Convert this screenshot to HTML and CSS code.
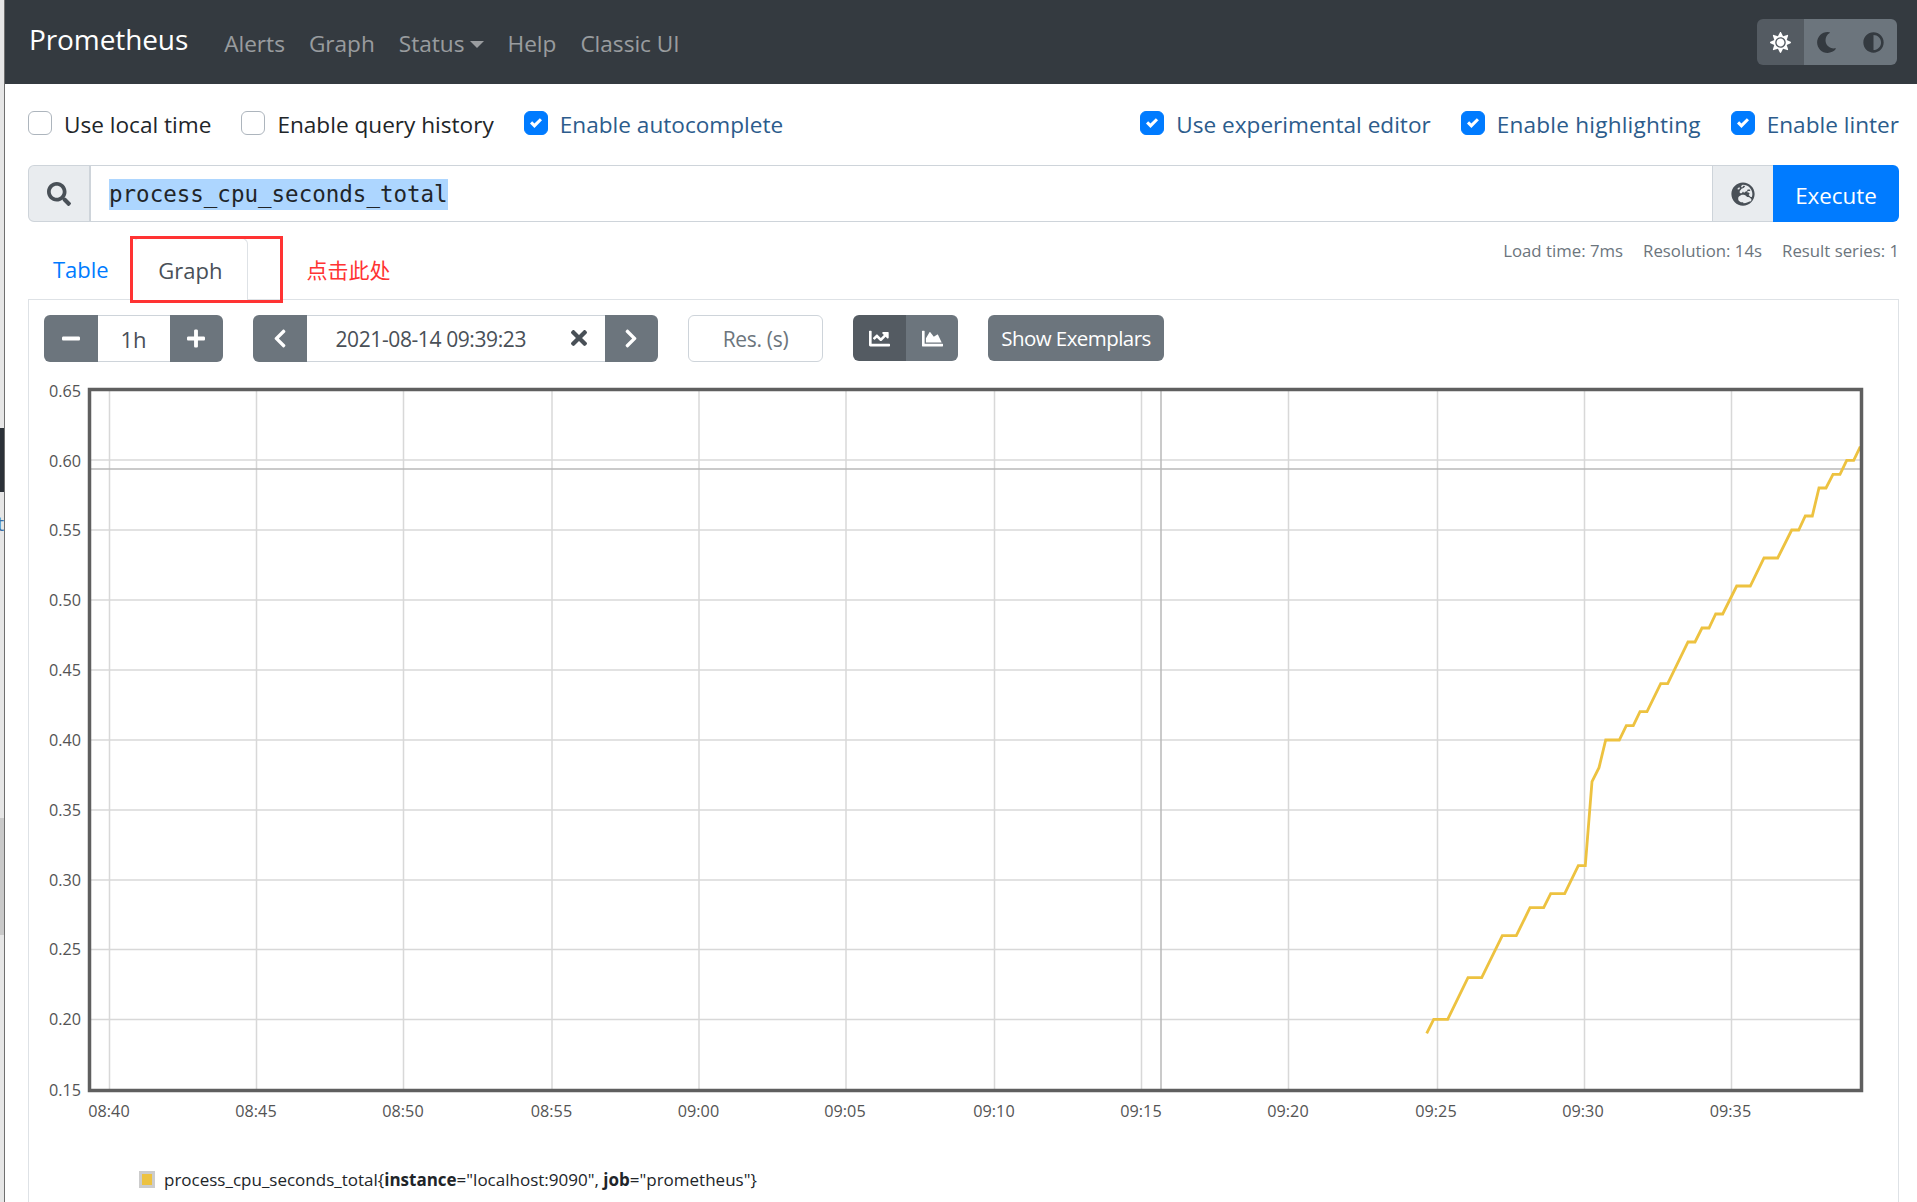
FILE: index.html
```html
<!DOCTYPE html>
<html lang="en">
<head>
<meta charset="utf-8">
<title>Prometheus Time Series Collection and Processing Server</title>
<link rel="stylesheet" href="styles.css">
</head>
<body>
<div class="edge">
  <div class="edge-dark"></div>
  <div class="edge-letter">t</div>
  <div class="edge-grey"></div>
</div>
<div class="page">
  <nav class="navbar">
    <a class="brand">Prometheus</a>
    <a class="nav-link">Alerts</a>
    <a class="nav-link">Graph</a>
    <a class="nav-link">Status<span class="caret"></span></a>
    <a class="nav-link">Help</a>
    <a class="nav-link">Classic UI</a>
    <div class="theme-toggle">
      <span class="theme-btn theme-active"><svg class="ico-theme" viewBox="0 0 512 512"><path fill="#fff" d="M256 160c-52.9 0-96 43.1-96 96s43.1 96 96 96 96-43.1 96-96-43.1-96-96-96zm246.4 80.5l-94.7-47.3 33.5-100.4c4.5-13.6-8.4-26.5-21.9-21.9l-100.4 33.5-47.4-94.8c-6.4-12.8-24.6-12.8-31 0l-47.3 94.7L92.7 70.8c-13.6-4.5-26.5 8.4-21.9 21.9l33.5 100.4-94.7 47.4c-12.8 6.4-12.8 24.6 0 31l94.7 47.3-33.5 100.5c-4.5 13.6 8.4 26.5 21.9 21.9l100.4-33.5 47.3 94.7c6.4 12.8 24.6 12.8 31 0l47.3-94.7 100.4 33.5c13.6 4.5 26.5-8.4 21.9-21.9l-33.5-100.4 94.7-47.3c13-6.5 13-24.7.2-31.1zm-155.9 106c-49.9 49.9-131.1 49.9-181 0-49.9-49.9-49.9-131.1 0-181 49.9-49.9 131.1-49.9 181 0 49.9 49.9 49.9 131.1 0 181z"/></svg></span>
      <span class="theme-btn"><svg class="ico-theme" viewBox="0 0 512 512"><path fill="#343a40" d="M283.211 512c78.962 0 151.079-35.925 198.857-94.792 7.068-8.708-.639-21.43-11.562-19.35-124.203 23.654-238.262-71.576-238.262-196.954 0-72.222 38.662-138.635 101.498-174.394 9.686-5.512 7.25-20.197-3.756-22.23A258.156 258.156 0 0 0 283.211 0c-141.309 0-256 114.511-256 256 0 141.309 114.511 256 256 256z"/></svg></span>
      <span class="theme-btn"><svg class="ico-theme" viewBox="0 0 512 512"><path fill="#343a40" d="M8 256c0 136.966 111.033 248 248 248s248-111.034 248-248S392.966 8 256 8 8 119.033 8 256zm248 184V72c101.705 0 184 82.311 184 184 0 101.705-82.311 184-184 184z"/></svg></span>
    </div>
  </nav>

  <main class="content">
    <div class="options">
      <div class="option-group">
        <label class="option"><span class="box"></span>Use local time</label>
        <label class="option"><span class="box"></span>Enable query history</label>
        <label class="option on"><span class="box"><svg class="tick" viewBox="0 0 8 8"><path fill="#fff" d="M6.564.75l-3.59 3.612-1.538-1.55L0 4.26l2.974 2.99L8 2.193z"/></svg></span>Enable autocomplete</label>
      </div>
      <div class="option-group">
        <label class="option on"><span class="box"><svg class="tick" viewBox="0 0 8 8"><path fill="#fff" d="M6.564.75l-3.59 3.612-1.538-1.55L0 4.26l2.974 2.99L8 2.193z"/></svg></span>Use experimental editor</label>
        <label class="option on wide"><span class="box"><svg class="tick" viewBox="0 0 8 8"><path fill="#fff" d="M6.564.75l-3.59 3.612-1.538-1.55L0 4.26l2.974 2.99L8 2.193z"/></svg></span>Enable highlighting</label>
        <label class="option on last"><span class="box"><svg class="tick" viewBox="0 0 8 8"><path fill="#fff" d="M6.564.75l-3.59 3.612-1.538-1.55L0 4.26l2.974 2.99L8 2.193z"/></svg></span>Enable linter</label>
      </div>
    </div>

    <div class="query">
      <span class="addon addon-left"><svg class="ico-24" viewBox="0 0 512 512"><path fill="#495057" d="M505 442.7L405.3 343c-4.5-4.5-10.6-7-17-7H372c27.6-35.3 44-79.7 44-128C416 93.1 322.9 0 208 0S0 93.1 0 208s93.1 208 208 208c48.3 0 92.7-16.4 128-44v16.3c0 6.4 2.5 12.5 7 17l99.7 99.7c9.4 9.4 24.6 9.4 33.9 0l28.3-28.3c9.4-9.4 9.4-24.6.1-34zM208 336c-70.7 0-128-57.2-128-128 0-70.7 57.2-128 128-128 70.7 0 128 57.2 128 128 0 70.7-57.2 128-128 128z"/></svg></span>
      <div class="query-input"><span class="selected">process_cpu_seconds_total</span></div>
      <span class="addon addon-right"><svg class="ico-24" viewBox="0 0 496 512"><path fill="#495057" d="M248 8C111 8 0 119 0 256s111 248 248 248 248-111 248-248S385 8 248 8zm200 248c0 22.5-3.9 44.2-10.8 64.4h-20.3c-4.3 0-8.4-1.7-11.4-4.8l-32-32.6c-4.5-4.6-4.5-12.1.1-16.7l12.5-12.5v-8.7c0-3-1.2-5.9-3.3-8l-9.4-9.4c-2.1-2.1-5-3.3-8-3.3h-16c-6.2 0-11.3-5.1-11.3-11.3 0-3 1.2-5.9 3.3-8l9.4-9.4c2.1-2.1 5-3.3 8-3.3h32c6.2 0 11.3-5.1 11.3-11.3v-9.4c0-6.2-5.1-11.3-11.3-11.3h-36.7c-8.8 0-16 7.2-16 16v4.5c0 6.9-4.4 13-10.9 15.2l-31.6 10.5c-3.3 1.1-5.5 4.1-5.5 7.6v2.2c0 4.4-3.6 8-8 8h-16c-4.4 0-8-3.6-8-8s-3.6-8-8-8H247c-3 0-5.8 1.7-7.2 4.4l-9.4 18.7c-2.7 5.4-8.2 8.8-14.3 8.8H194c-8.8 0-16-7.2-16-16V199c0-4.2 1.7-8.3 4.7-11.3l20.1-20.1c4.6-4.6 7.2-10.9 7.2-17.5 0-3.4 2.2-6.5 5.5-7.6l40-13.3c1.7-.6 3.2-1.5 4.4-2.7l26.8-26.8c2.1-2.1 3.3-5 3.3-8 0-6.2-5.1-11.3-11.3-11.3H258l-16 16v8c0 4.4-3.6 8-8 8h-16c-4.4 0-8-3.6-8-8v-20c0-2.5 1.2-4.9 3.2-6.4l28.9-21.7c1.9-.1 3.8-.3 5.7-.3C358.3 56 448 145.7 448 256zM130.1 149.1c0-3 1.2-5.9 3.3-8l25.4-25.4c2.1-2.1 5-3.3 8-3.3 6.2 0 11.3 5.1 11.3 11.3v16c0 3-1.2 5.9-3.3 8l-9.4 9.4c-2.1 2.1-5 3.3-8 3.3h-16c-6.2 0-11.3-5.1-11.3-11.3zm128 306.4v-7.1c0-8.8-7.2-16-16-16h-20.2c-10.8 0-26.7-5.3-35.4-11.8l-22.2-16.7c-11.5-8.6-18.2-22.1-18.2-36.4v-23.9c0-16 8.4-30.8 22.1-39l42.9-25.7c7.1-4.2 15.2-6.5 23.4-6.5h31.2c10.9 0 21.4 3.9 29.6 10.9l43.2 37.1h18.3c17 0 33.2 6.7 45.3 18.7l17.3 17.3c4.9 4.9 7.6 11.5 7.6 18.4 0 13.1-3.5 25.9-10 37.2C380.9 416.3 323.6 451 258.1 455.5z"/></svg></span>
      <button class="execute">Execute</button>
    </div>

    <div class="tabs-row">
      <div class="tabs">
        <a class="tab tab-link">Table</a>
        <a class="tab tab-active">Graph</a>
        <span class="annotation">点击此处</span>
      </div>
      <div class="stats">
        <span>Load time: 7ms</span>
        <span>Resolution: 14s</span>
        <span>Result series: 1</span>
      </div>
      <div class="red-box"></div>
    </div>

    <section class="panel">
      <div class="controls">
        <div class="group">
          <span class="btn btn-square"><svg class="ico-18" viewBox="0 0 448 512"><path fill="#fff" d="M416 208H32c-17.67 0-32 14.33-32 32v32c0 17.67 14.33 32 32 32h384c17.67 0 32-14.33 32-32v-32c0-17.67-14.33-32-32-32z"/></svg></span>
          <span class="field field-range">1h</span>
          <span class="btn btn-square"><svg class="ico-18" viewBox="0 0 448 512"><path fill="#fff" d="M416 208H272V64c0-17.67-14.33-32-32-32h-32c-17.67 0-32 14.33-32 32v144H32c-17.67 0-32 14.33-32 32v32c0 17.67 14.33 32 32 32h144v144c0 17.67 14.33 32 32 32h32c17.67 0 32-14.33 32-32V304h144c17.67 0 32-14.33 32-32v-32c0-17.67-14.33-32-32-32z"/></svg></span>
        </div>
        <div class="group group-time">
          <span class="btn btn-square"><svg class="ico-21" viewBox="0 0 320 512"><path fill="#fff" d="M34.52 239.03L228.87 44.69c9.37-9.37 24.57-9.37 33.94 0l22.67 22.67c9.36 9.36 9.37 24.52.04 33.9L131.49 256l154.02 154.75c9.34 9.38 9.32 24.54-.04 33.9l-22.67 22.67c-9.37 9.37-24.57 9.37-33.94 0L34.52 272.97c-9.37-9.37-9.37-24.57 0-33.94z"/></svg></span>
          <span class="field field-date">2021-08-14 09:39:23<svg class="ico-clear" viewBox="0 0 352 512"><path fill="#495057" d="M242.72 256l100.07-100.07c12.28-12.28 12.28-32.19 0-44.48l-22.24-22.24c-12.28-12.28-32.19-12.28-44.48 0L176 189.28 75.93 89.21c-12.28-12.28-32.19-12.28-44.48 0L9.21 111.45c-12.28 12.28-12.28 32.19 0 44.48L109.28 256 9.21 356.07c-12.28 12.28-12.28 32.19 0 44.48l22.24 22.24c12.28 12.28 32.2 12.28 44.48 0L176 322.72l100.07 100.07c12.28 12.28 32.2 12.28 44.48 0l22.24-22.24c12.28-12.28 12.28-32.19 0-44.48L242.72 256z"/></svg></span>
          <span class="btn btn-square"><svg class="ico-21" viewBox="0 0 320 512"><path fill="#fff" d="M285.476 272.971L91.132 467.314c-9.373 9.373-24.569 9.373-33.941 0l-22.667-22.667c-9.357-9.357-9.375-24.522-.04-33.901L188.505 256 34.484 101.255c-9.335-9.379-9.317-24.544.04-33.901l22.667-22.667c9.373-9.373 24.569-9.373 33.941 0L285.475 239.03c9.373 9.372 9.373 24.568.001 33.941z"/></svg></span>
        </div>
        <span class="res">Res. (s)</span>
        <div class="group group-type">
          <span class="btn btn-type btn-dark"><svg class="ico-type" viewBox="0 0 512 512"><path fill="#fff" d="M496 384H64V80c0-8.84-7.16-16-16-16H16C7.16 64 0 71.16 0 80v336c0 17.67 14.33 32 32 32h464c8.84 0 16-7.16 16-16v-32c0-8.84-7.16-16-16-16zM464 96H345.94c-21.38 0-32.09 25.85-16.97 40.97l32.4 32.4L288 242.75l-73.37-73.37c-12.5-12.5-32.76-12.5-45.25 0l-68.69 68.69c-6.25 6.25-6.25 16.38 0 22.63l22.62 22.62c6.25 6.25 16.38 6.25 22.63 0L192 237.25l73.37 73.37c12.5 12.5 32.76 12.5 45.25 0l96-96 32.4 32.4c15.12 15.12 40.97 4.41 40.97-16.97V112c0-8.84-7.16-16-16-16z"/></svg></span>
          <span class="btn btn-type btn-last"><svg class="ico-type" viewBox="0 0 512 512"><path fill="#fff" d="M500 384c6.6 0 12 5.4 12 12v40c0 6.6-5.4 12-12 12H12c-6.6 0-12-5.4-12-12V76c0-6.6 5.4-12 12-12h40c6.6 0 12 5.4 12 12v308h436zM372.7 159.5L288 216l-85.3-113.7c-5.1-6.8-15.5-6.3-19.9 1L96 248v104h384l-89.9-187.8c-3.2-6.5-11.4-8.7-17.4-4.7z"/></svg></span>
        </div>
        <span class="btn btn-exemplars">Show Exemplars</span>
      </div>

      <svg class="chart" viewBox="29 380 1869 750" width="1869" height="750">
        <g class="grid">
          <line x1="91" x2="1860" y1="460" y2="460"/><line x1="91" x2="1860" y1="530" y2="530"/><line x1="91" x2="1860" y1="600" y2="600"/><line x1="91" x2="1860" y1="670" y2="670"/><line x1="91" x2="1860" y1="740" y2="740"/><line x1="91" x2="1860" y1="810" y2="810"/><line x1="91" x2="1860" y1="880" y2="880"/><line x1="91" x2="1860" y1="949.5" y2="949.5"/><line x1="91" x2="1860" y1="1019.5" y2="1019.5"/>
          <line x1="109.5" x2="109.5" y1="391" y2="1089"/><line x1="256.5" x2="256.5" y1="391" y2="1089"/><line x1="403.5" x2="403.5" y1="391" y2="1089"/><line x1="552" x2="552" y1="391" y2="1089"/><line x1="699" x2="699" y1="391" y2="1089"/><line x1="846" x2="846" y1="391" y2="1089"/><line x1="994.5" x2="994.5" y1="391" y2="1089"/><line x1="1141.5" x2="1141.5" y1="391" y2="1089"/><line x1="1288.5" x2="1288.5" y1="391" y2="1089"/><line x1="1437.5" x2="1437.5" y1="391" y2="1089"/><line x1="1584.5" x2="1584.5" y1="391" y2="1089"/><line x1="1731.5" x2="1731.5" y1="391" y2="1089"/>
        </g>
        <g class="crosshair"><line x1="91" x2="1860" y1="469" y2="469"/><line x1="1161" x2="1161" y1="391" y2="1089"/></g>
        <polyline class="series" points="1426.7,1033.3 1433.7,1019.3 1447.7,1019.3 1468,977.7 1481.7,977.7 1502.3,935.7 1516.3,935.7 1530,907.7 1543.7,907.7 1550.7,893.7 1564.7,893.7 1578.3,865.7 1585.3,865.7 1592,781.7 1599,767.7 1605.7,740 1619.3,740 1626.3,725.7 1633.3,725.7 1640,711.7 1647,711.7 1660.7,683.7 1667.7,683.7 1688,642 1695,642 1702,628 1709,628 1715.7,614 1722.7,614 1736.7,586 1750.3,586 1764,558 1777.7,558 1791.7,530 1798.7,530 1805.3,516 1812.3,516 1819,488 1826,488 1833,474.3 1840,474.3 1846.7,460.3 1853.7,460.3 1860.3,446.7"/>
        <rect class="plot-frame" x="89.5" y="389.5" width="1772" height="701"/>
        <g class="ticks ticks-y">
          <text x="81" y="397">0.65</text><text x="81" y="467">0.60</text><text x="81" y="536">0.55</text><text x="81" y="606">0.50</text><text x="81" y="676">0.45</text><text x="81" y="746">0.40</text><text x="81" y="816">0.35</text><text x="81" y="886">0.30</text><text x="81" y="955">0.25</text><text x="81" y="1025">0.20</text><text x="81" y="1096">0.15</text>
        </g>
        <g class="ticks ticks-x">
          <text x="109" y="1117">08:40</text><text x="256" y="1117">08:45</text><text x="403" y="1117">08:50</text><text x="551.5" y="1117">08:55</text><text x="698.5" y="1117">09:00</text><text x="845" y="1117">09:05</text><text x="994" y="1117">09:10</text><text x="1141" y="1117">09:15</text><text x="1288" y="1117">09:20</text><text x="1436" y="1117">09:25</text><text x="1583" y="1117">09:30</text><text x="1730.5" y="1117">09:35</text>
        </g>
      </svg>

      <div class="legend">
        <span class="swatch"></span>
        <span class="legend-text">process_cpu_seconds_total{<b>instance</b>="localhost:9090", <b>job</b>="prometheus"}</span>
      </div>
    </section>
  </main>
</div>
</body>
</html>
```
FILE: styles.css
```css
* { box-sizing: border-box; }
html, body { margin: 0; height: 1202px; overflow: hidden; }
body {
  display: flex;
  background: #fff;
  font-family: "Open Sans", "Noto Sans", sans-serif;
  font-size: 22.6px;
  color: #212529;
}

/* sliver of the window behind */
.edge {
  width: 5px;
  flex: none;
  background: #e6e6e6;
  border-right: 1px solid #6f6f6f;
  overflow: hidden;
  padding-top: 428px;
}
.edge-dark { height: 64px; background: #2b3138; }
.edge-letter { height: 30px; margin-top: 17px; margin-left: -3px; font-size: 20px; line-height: 30px; color: #3b6ea5; }
.edge-grey { height: 117px; margin-top: 279px; background: #c9c9c9; }

.page { flex: 1; min-width: 0; display: flex; flex-direction: column; }

/* navbar */
.navbar {
  height: 84px;
  flex: none;
  display: flex;
  align-items: center;
  background: #343a40;
  padding: 0 20px 0 24px;
}
.brand { color: #fff; font-size: 28px; letter-spacing: -.1px; margin-right: 24px; margin-top: -7px; }
.nav-link { color: rgba(255,255,255,.5); padding: 0 12px; margin-top: 2px; }
.caret {
  display: inline-block;
  margin-left: 5px;
  vertical-align: 4px;
  border-top: 7px solid rgba(255,255,255,.5);
  border-left: 7px solid transparent;
  border-right: 7px solid transparent;
}
.theme-toggle { margin-left: auto; display: flex; height: 46px; border-radius: 6px; overflow: hidden; }
.theme-btn { width: 46.7px; display: flex; align-items: center; justify-content: center; background: #6c757d; }
.theme-active { background: #545b62; }
.ico-theme { width: 21px; height: 21px; }

/* content */
.content { flex: 1; display: flex; flex-direction: column; padding: 0 18px 0 23px; min-height: 0; }
.options { display: flex; justify-content: space-between; padding-top: 22px; margin-bottom: 23px; }
.option-group { display: flex; }
.option { display: flex; align-items: center; height: 36px; margin-right: 30px; white-space: nowrap; }
.option.last { margin-right: 0; }
.option.on { color: #2c5c8c; }
.option.wide { letter-spacing: .2px; }
.box {
  width: 24px; height: 24px;
  margin-right: 12px;
  margin-top: -2px;
  border: 1px solid #adb5bd;
  border-radius: 6px;
  background: #fff;
  display: flex; align-items: center; justify-content: center;
  flex: none;
}
.on .box { background: #007bff; border-color: #007bff; }
.tick { width: 12px; height: 12px; }

.query { display: flex; height: 57px; flex: none; }
.addon {
  flex: none;
  width: 62px;
  display: flex; align-items: center; justify-content: center;
  background: #e9ecef;
  border: 1px solid #ced4da;
}
.addon-left { width: 63px; border-radius: 6px 0 0 6px; border-right-width: 2px; }
.addon-right { width: 61px; border-right: 0; }
.ico-24 { width: 24px; height: 24px; }
.query-input {
  flex: 1;
  border: 1px solid #ced4da;
  border-left: 0; border-right: 0;
  padding-left: 18px;
  display: flex; align-items: center;
}
.selected {
  font-family: "DejaVu Sans Mono", monospace;
  font-size: 22.5px;
  line-height: 31px;
  background: #add6ff;
  margin-top: 2px;
}
.execute {
  flex: none;
  width: 126px;
  border: 0;
  border-radius: 0 6px 6px 0;
  padding: 4px 0 0;
  background: #007bff;
  color: #fff;
  font-family: inherit;
  font-size: 22.4px;
}

.tabs-row { position: relative; display: flex; justify-content: space-between; flex: none; height: 77px; }
.tabs { display: flex; align-items: stretch; padding-top: 16px; height: 78px; position: relative; z-index: 1; }
.tab { display: flex; align-items: center; font-size: 22px; }
.tab-link { color: #007bff; padding: 0 24px 0 25px; }
.tab-active {
  margin-left: .6px;
  padding: 0 25px 0 24px;
  background: #fff;
  color: #495057;
  border: 1px solid #dee2e6;
  border-left-color: transparent;
  border-bottom: 0;
  border-radius: 6px 6px 0 0;
}
.annotation {
  align-self: center;
  margin-left: 58px;
  color: #f33;
  font-family: "Noto Sans CJK SC", sans-serif;
  font-size: 21px;
}
.stats { display: flex; gap: 20px; padding-top: 17px; font-size: 16.8px; color: #6c757d; }
.red-box {
  position: absolute; z-index: 2;
  left: 102px; top: 14px;
  width: 153px; height: 67px;
  border: 3px solid #f33;
  pointer-events: none;
}

.panel { flex: 1; min-height: 0; border: 1px solid #dee2e6; border-bottom: 0; }
.controls { display: flex; align-items: flex-start; padding: 15px 15px 18px; height: 80px; }
.group { display: flex; height: 47px; border-radius: 6px; overflow: hidden; }
.group-time { margin-left: 30px; }
.group-type { margin-left: 30px; height: 46px; }
.btn {
  display: flex; align-items: center; justify-content: center;
  background: #6c757d; color: #fff; flex: none;
}
.btn-square { width: 53.5px; }
.field {
  display: flex; align-items: center;
  border: 1px solid #ced4da; border-left: 0; border-right: 0;
  color: #495057;
}
.field-range { width: 72px; justify-content: center; font-size: 22px; }
.field-date { width: 298px; padding-left: 29px; position: relative; font-size: 21px; letter-spacing: -.4px; }
.ico-clear { position: absolute; right: 18px; top: 10px; width: 16px; height: 24px; }
.ico-18 { width: 18px; height: 21px; }
.ico-21 { width: 14px; height: 21px; }
.res {
  width: 135px; height: 47px; margin-left: 30px;
  border: 1px solid #ced4da; border-radius: 6px;
  display: flex; align-items: center; justify-content: center;
  color: #6c757d;
  font-size: 21px;
  letter-spacing: -.3px;
}
.btn-type { width: 53px; }
.btn-last { width: 52px; }
.btn-dark { background: #545b62; }
.ico-type { width: 21px; height: 21px; }
.btn-exemplars { height: 46px; width: 176px; margin-left: 30px; border-radius: 6px; font-size: 20.5px; letter-spacing: -.55px; }

.chart { display: block; }
.grid line { stroke: #d8d8d8; stroke-width: 1.5; }
.crosshair line { stroke: #b9b9b9; stroke-width: 1.5; }
.series { fill: none; stroke: #edc240; stroke-width: 2.8; stroke-linejoin: miter; }
.plot-frame { fill: none; stroke: #5f5f5f; stroke-width: 3.5; }
.ticks text { font-size: 16.2px; fill: #545454; }
.ticks-y text { text-anchor: end; }
.ticks-x text { text-anchor: middle; }

.legend { display: flex; align-items: center; height: 22px; margin: 38px 0 0 110px; font-size: 17px; }
.swatch { width: 16px; height: 17px; flex: none; margin-right: 9px; background: #edc240; border: 3px solid #ccc; }
.legend-text { white-space: nowrap; }
```
